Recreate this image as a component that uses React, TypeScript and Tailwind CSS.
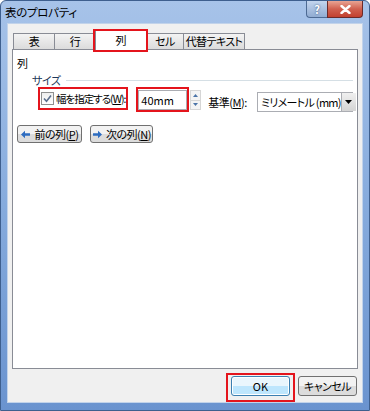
import React from "react";

const jp = "font-['Noto_Sans_CJK_JP',sans-serif] [font-feature-settings:'palt'] whitespace-nowrap";

const BlueArrow = ({ dir }: { dir: "left" | "right" }) => (
  <svg width="11" height="9" viewBox="0 0 11 9" className={dir === "left" ? "" : "rotate-180"}>
    <path d="M1 4.5 L5 0.8 L5 3.2 L10 3.2 L10 5.8 L5 5.8 L5 8.2 Z" fill="#2d6cc0" />
  </svg>
);

const Tab = ({ label, w }: { label: string; w: string }) => (
  <div
    className={`${w} h-[17px] flex items-center justify-center border border-[#898c95] border-r-0 bg-gradient-to-b from-[#f3f3f3] to-[#dcdcdc] text-[11px] tracking-[-0.5px] text-black`}
  >
    {label}
  </div>
);

const PushButton = ({ children, w }: { children: React.ReactNode; w: string }) => (
  <div
    className={`${w} h-[18px] flex items-center justify-center gap-[3px] rounded-[3px] border border-[#707070] bg-gradient-to-b from-[#f2f2f2] from-50% to-[#dcdcdc] to-50% text-[11px] tracking-[-0.5px] text-black`}
  >
    {children}
  </div>
);

export default function App() {
  return (
    <div className={`w-[370px] h-[411px] flex flex-col rounded-t-[6px] border border-[#3e5f8e] bg-gradient-to-b from-[#a7c3e9] via-[#86abdd] to-[#6a93cf] ${jp}`}>
      {/* title bar */}
      <div className="h-[22px] flex items-start">
        <div className="pl-[4px] pt-[3px] text-[11.5px] tracking-[-0.3px] text-black">表のプロパティ</div>
        <div className="ml-auto mr-[6px] flex">
          <div className="w-[21px] h-[17px] flex items-center justify-center rounded-bl-[4px] border border-[#4d6a93] border-t-0 border-r-0 bg-gradient-to-b from-[#c3d5ee] to-[#91acd2] text-[11px] font-bold text-white [text-shadow:0_0_2px_#2c4a75]">
            ?
          </div>
          <div className="w-[36px] h-[17px] flex items-center justify-center rounded-br-[4px] border border-[#6b2a2a] border-t-0 bg-gradient-to-b from-[#e8a493] via-[#d0604f] to-[#c2402f]">
            <svg width="11" height="9" viewBox="0 0 11 9">
              <path d="M1.5 1 L9.5 8 M9.5 1 L1.5 8" stroke="#ffffff" strokeWidth="2.4" strokeLinecap="round" />
            </svg>
          </div>
        </div>
      </div>

      {/* client area */}
      <div className="flex-1 mx-[6px] mb-[7px] flex flex-col border border-[#c2d3ea] bg-[#f0f0f0] px-[4px] pt-[4px] pb-[6px]">
        {/* tabs */}
        <div className="h-[22px] -mb-[1px] ml-[1px] flex items-end">
          <Tab label="表" w="w-[41px]" />
          <Tab label="行" w="w-[41px]" />
          <div className="relative z-10 w-[52px] h-[21px] flex items-center justify-center border border-[#898c95] border-b-0 bg-white text-[11px] text-black">
            列
            <div className="absolute -left-[3px] -right-[2px] -top-[1px] -bottom-[2px] border-2 border-[#e4141c]" />
          </div>
          <div className="w-[36px] h-[17px] flex items-center justify-center border border-[#898c95] border-l-0 border-r-0 bg-gradient-to-b from-[#f3f3f3] to-[#dcdcdc] text-[11px] tracking-[-0.5px]">
            セル
          </div>
          <div className="w-[62px] h-[17px] flex items-center justify-center border border-[#898c95] bg-gradient-to-b from-[#f3f3f3] to-[#dcdcdc] text-[11px] tracking-[-0.6px]">
            代替テキスト
          </div>
        </div>

        {/* panel */}
        <div className="flex-1 flex flex-col border border-[#898c95] bg-white pt-[6px] text-[11px] tracking-[-0.5px] text-black">
          <div className="pl-[4px] leading-[14px]">列</div>
          <div className="mt-[3px] ml-[19px] mr-[4px] flex items-center gap-[6px] leading-[14px]">
            <span className="text-[#1e395b]">サイズ</span>
            <div className="flex-1 h-px bg-[#d5dfe5]" />
          </div>

          <div className="flex items-start">
            <div className="ml-[25px] h-[23px] flex items-center border-2 border-[#e4141c] pl-[1px] pr-[1px]">
              <div className="w-[13px] h-[13px] shrink-0 flex items-center justify-center border border-[#8e8f8f] bg-gradient-to-b from-[#eeeeee] to-[#ffffff]">
                <svg width="9" height="9" viewBox="0 0 9 9">
                  <path d="M1 4.5 L3.5 7.2 L8 1.5" stroke="#5b6f8d" strokeWidth="1.6" fill="none" />
                </svg>
              </div>
              <span className="ml-[2px] text-[10.5px] tracking-[-1px]">
                幅を指定する(<span className="underline">W</span>):
              </span>
            </div>
            <div className="ml-[8px] w-[53px] h-[25px] border-2 border-[#e4141c] pt-[1px]">
              <div className="h-[20px] flex items-center border border-[#abadb3] bg-white pl-[2px] text-[11px] tracking-normal">40mm</div>
            </div>
            <div className="ml-[1px] mt-[3px] w-[11px] h-[20px] flex flex-col border border-[#d6d6d6] bg-[#f4f4f4]">
              <div className="flex-1 flex items-center justify-center border-b border-[#d6d6d6]">
                <svg width="5" height="3" viewBox="0 0 5 3"><path d="M0 3 L2.5 0 L5 3 Z" fill="#4b74a8" /></svg>
              </div>
              <div className="flex-1 flex items-center justify-center">
                <svg width="5" height="3" viewBox="0 0 5 3"><path d="M0 0 L2.5 3 L5 0 Z" fill="#4b74a8" /></svg>
              </div>
            </div>
            <span className="ml-[7px] mt-[8px] leading-[14px]">
              基準(<span className="underline">M</span>):
            </span>
            <div className="ml-auto mr-[4px] mt-[5px] w-[96px] h-[20px] flex items-center border border-[#abadb3] bg-white">
              <span className="flex-1 pl-[3px] tracking-[-0.7px]">ミリメートル (mm)</span>
              <div className="w-[15px] h-full shrink-0 flex items-center justify-center border-l border-[#abadb3] bg-gradient-to-b from-[#f0f0f0] to-[#d4d4d4]">
                <svg width="7" height="4" viewBox="0 0 7 4"><path d="M0 0 L3.5 4 L7 0 Z" fill="#000000" /></svg>
              </div>
            </div>
          </div>

          <div className="mt-[13px] ml-[4px] flex gap-[8px]">
            <PushButton w="w-[65px]">
              <BlueArrow dir="left" />
              <span>
                前の列(<span className="underline">P</span>)
              </span>
            </PushButton>
            <PushButton w="w-[63px]">
              <BlueArrow dir="right" />
              <span>
                次の列(<span className="underline">N</span>)
              </span>
            </PushButton>
          </div>
        </div>

        {/* dialog buttons */}
        <div className="mt-[7px] flex justify-end gap-[8px] pr-[1px]">
          <div className="relative w-[59px] h-[20px] flex items-center justify-center rounded-[3px] border border-[#3c7fb1] bg-gradient-to-b from-[#eaf6fd] from-50% to-[#bee6fd] to-50% text-[11px] shadow-[inset_0_0_0_1px_#ffffff]">
            OK
            <div className="absolute -left-[6px] -right-[6px] -top-[4px] -bottom-[7px] border-2 border-[#e4141c]" />
          </div>
          <div className="w-[59px] h-[20px] flex items-center justify-center rounded-[3px] border border-[#707070] bg-gradient-to-b from-[#f2f2f2] from-50% to-[#dcdcdc] to-50% text-[11px] tracking-[-0.5px]">
            キャンセル
          </div>
        </div>
      </div>
    </div>
  );
}
